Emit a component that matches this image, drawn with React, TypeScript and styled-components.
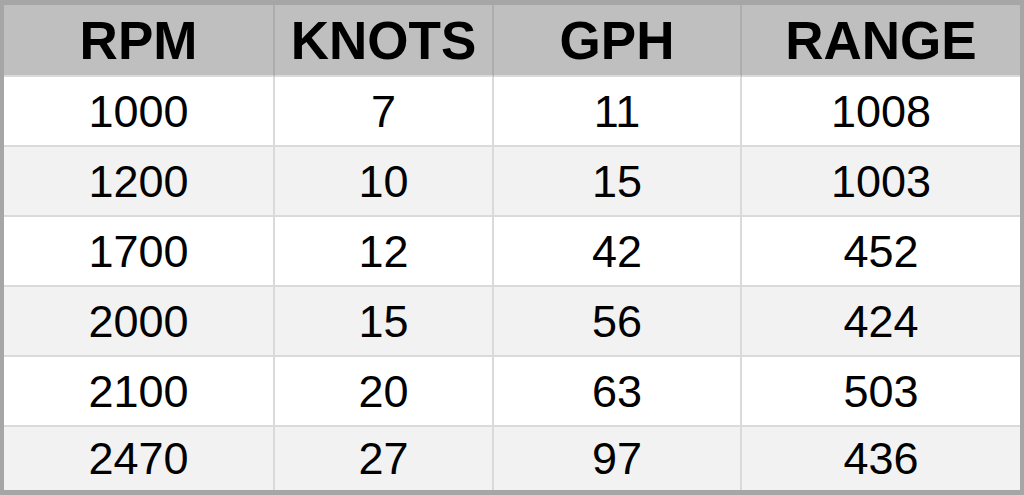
import React from 'react';
import styled, { createGlobalStyle } from 'styled-components';

const GlobalStyle = createGlobalStyle`
    html, body {
        margin: 0;
        padding: 0;
        background: #ffffff;
    }
    body {
        font-family: "Liberation Sans", Arial, sans-serif;
    }
`

const Frame = styled.div`
    width: 1024px;
    height: 495px;
    box-sizing: border-box;
    border-style: solid;
    border-color: #a6a6a6;
    border-width: 5px 4px 5px 4px;
    overflow: hidden;
    background: #ffffff;
`

const Table = styled.table`
    width: 1016px;
    table-layout: fixed;
    border-collapse: separate;
    border-spacing: 0;
`

const Col = styled.col<{ $width: number }>`
    width: ${p => p.$width}px;
`

const HeadCell = styled.th<{ $last?: boolean }>`
    height: 70px;
    padding: 0;
    background: #bfbfbf;
    color: #000000;
    font-size: 53px;
    font-weight: 700;
    text-align: center;
    vertical-align: middle;
    line-height: 1;
    border-bottom: 2px solid #dadada;
    border-right: ${p => (p.$last ? 'none' : '2px solid #adadad')};
`

const Row = styled.tr<{ $shade: boolean }>`
    background: ${p => (p.$shade ? '#f2f2f2' : '#ffffff')};
`

const Cell = styled.td<{ $last?: boolean; $final?: boolean }>`
    height: ${p => (p.$final ? 63 : 68)}px;
    padding: 0;
    color: #000000;
    font-size: 45px;
    text-align: center;
    vertical-align: middle;
    line-height: 1;
    border-bottom: ${p => (p.$final ? 'none' : '2px solid #dadada')};
    border-right: ${p => (p.$last ? 'none' : '2px solid #dadada')};
`

const widths = [271, 219, 248, 278];
const headers = ['RPM', 'KNOTS', 'GPH', 'RANGE'];
const rows = [
    [1000, 7, 11, 1008],
    [1200, 10, 15, 1003],
    [1700, 12, 42, 452],
    [2000, 15, 56, 424],
    [2100, 20, 63, 503],
    [2470, 27, 97, 436],
];

function App() {
    return (
        <>
            <GlobalStyle />
            <Frame>
                <Table>
                    <colgroup>
                        {widths.map((w, i) => <Col key={i} $width={w} />)}
                    </colgroup>
                    <thead>
                        <tr>
                            {headers.map((h, i) => (
                                <HeadCell key={h} $last={i === headers.length - 1}>{h}</HeadCell>
                            ))}
                        </tr>
                    </thead>
                    <tbody>
                        {rows.map((r, ri) => (
                            <Row key={ri} $shade={ri % 2 === 1}>
                                {r.map((v, ci) => (
                                    <Cell key={ci} $last={ci === r.length - 1} $final={ri === rows.length - 1}>
                                        {v}
                                    </Cell>
                                ))}
                            </Row>
                        ))}
                    </tbody>
                </Table>
            </Frame>
        </>
    )
};

export default App;
